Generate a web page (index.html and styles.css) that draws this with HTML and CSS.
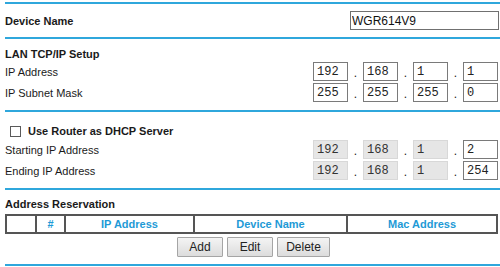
FILE: index.html
```html
<!DOCTYPE html>
<html>
<head>
<meta charset="utf-8">
<link rel="stylesheet" href="styles.css">
</head>
<body>
<div class="page">
  <div class="rule rule-top"></div>
  <div class="row device-row">
    <span class="label bold">Device Name</span>
    <input class="name-input" type="text" value="WGR614V9">
  </div>
  <div class="rule"></div>

  <div class="section-title bold">LAN TCP/IP Setup</div>
  <div class="row">
    <span class="label">IP Address</span>
    <div class="ip">
      <input class="oct" value="192"><span class="dot">.</span><input class="oct" value="168"><span class="dot">.</span><input class="oct" value="1"><span class="dot">.</span><input class="oct" value="1">
    </div>
  </div>
  <div class="row">
    <span class="label">IP Subnet Mask</span>
    <div class="ip">
      <input class="oct" value="255"><span class="dot">.</span><input class="oct" value="255"><span class="dot">.</span><input class="oct" value="255"><span class="dot">.</span><input class="oct" value="0">
    </div>
  </div>
  <div class="rule rule-mid"></div>

  <label class="check-title bold"><input type="checkbox" class="check"><span>Use Router as DHCP Server</span></label>
  <div class="row">
    <span class="label">Starting IP Address</span>
    <div class="ip">
      <input class="oct dis" value="192" disabled><span class="dot">.</span><input class="oct dis" value="168" disabled><span class="dot">.</span><input class="oct dis" value="1" disabled><span class="dot">.</span><input class="oct" value="2">
    </div>
  </div>
  <div class="row">
    <span class="label">Ending IP Address</span>
    <div class="ip">
      <input class="oct dis" value="192" disabled><span class="dot">.</span><input class="oct dis" value="168" disabled><span class="dot">.</span><input class="oct dis" value="1" disabled><span class="dot">.</span><input class="oct" value="254">
    </div>
  </div>
  <div class="rule rule-mid"></div>

  <div class="section-title res-title bold">Address Reservation</div>
  <table class="res">
    <tr>
      <th class="c0"></th>
      <th class="c1">#</th>
      <th class="c2">IP Address</th>
      <th class="c3">Device Name</th>
      <th class="c4">Mac Address</th>
    </tr>
  </table>
  <div class="buttons">
    <button class="btn btn-add">Add</button>
    <button class="btn btn-edit">Edit</button>
    <button class="btn btn-del">Delete</button>
  </div>
  <div class="rule rule-bottom"></div>
</div>
</body>
</html>
```
FILE: styles.css
```css
* { box-sizing: border-box; }
html, body { margin: 0; padding: 0; background: #fff; }
body {
  font-family: "Liberation Sans", Arial, sans-serif;
  font-size: 11px;
  color: #1a1a1a;
  width: 500px;
  height: 267px;
  overflow: hidden;
}
.page { padding-left: 5px; }
.bold { font-weight: bold; }

.rule { height: 2px; background: #2fa7dc; }
.rule-top { margin-top: 2px; }
.rule-mid { margin-top: 7px; }
.rule-bottom { margin-top: 7px; }

.row {
  display: flex;
  align-items: center;
  height: 21px;
  padding-right: 2px;
}
.label { flex: 1; white-space: nowrap; }

.device-row { height: 33px; padding-right: 1px; }
.name-input {
  width: 149px;
  height: 19px;
  border: 1px solid #707070;
  font-family: "Liberation Sans", Arial, sans-serif;
  font-size: 12px;
  padding: 0 0 0 1px;
  color: #111;
  margin: 0;
}

.section-title { padding-top: 8px; line-height: 14px; height: 22px; }
.res-title { padding-top: 7px; height: 24px; }

.ip { display: flex; align-items: center; }
.oct {
  width: 35px;
  height: 19px;
  margin: 0;
  border: 1px solid #7a7a7a;
  font-family: "Liberation Mono", "Courier New", monospace;
  font-size: 12px;
  padding: 0 0 0 3px;
  color: #222;
  background: #fff;
}
.oct.dis {
  background: #e6e6e6;
  border-color: #d8d8d8;
  color: #333;
}
.dot {
  width: 15px;
  text-align: center;
  font-size: 12px;
  position: relative;
  top: 1px;
}

.check-title {
  display: flex;
  align-items: center;
  height: 27px;
  padding-top: 11px;
  line-height: 14px;
}
.check {
  -webkit-appearance: none;
  appearance: none;
  width: 11px;
  height: 11px;
  margin: 0 7px 0 5px;
  border: 1px solid #5a5a5a;
  background: #fff;
}

.res {
  border-collapse: collapse;
  width: 493px;
  height: 20px;
  border: 2px solid #555;
  table-layout: fixed;
}
.res th {
  border: 2px solid #555;
  color: #1e9ad6;
  font-size: 11px;
  font-weight: bold;
  padding: 0;
  height: 16px;
  text-align: center;
}
.c0 { width: 30px; }
.c1 { width: 29px; }
.c2 { width: 129px; }
.c3 { width: 153px; }

.buttons {
  display: flex;
  justify-content: center;
  gap: 4px;
  margin-top: 3px;
  padding-left: 2px;
}
.btn {
  height: 20px;
  margin: 0;
  padding: 0;
  border: 1px solid #a5a5a5;
  border-radius: 1px;
  background: linear-gradient(#f4f4f4, #dcdcdc);
  font-family: "Liberation Sans", Arial, sans-serif;
  font-size: 12px;
  color: #222;
}
.btn-add, .btn-edit { width: 46px; }
.btn-del { width: 53px; }
```
